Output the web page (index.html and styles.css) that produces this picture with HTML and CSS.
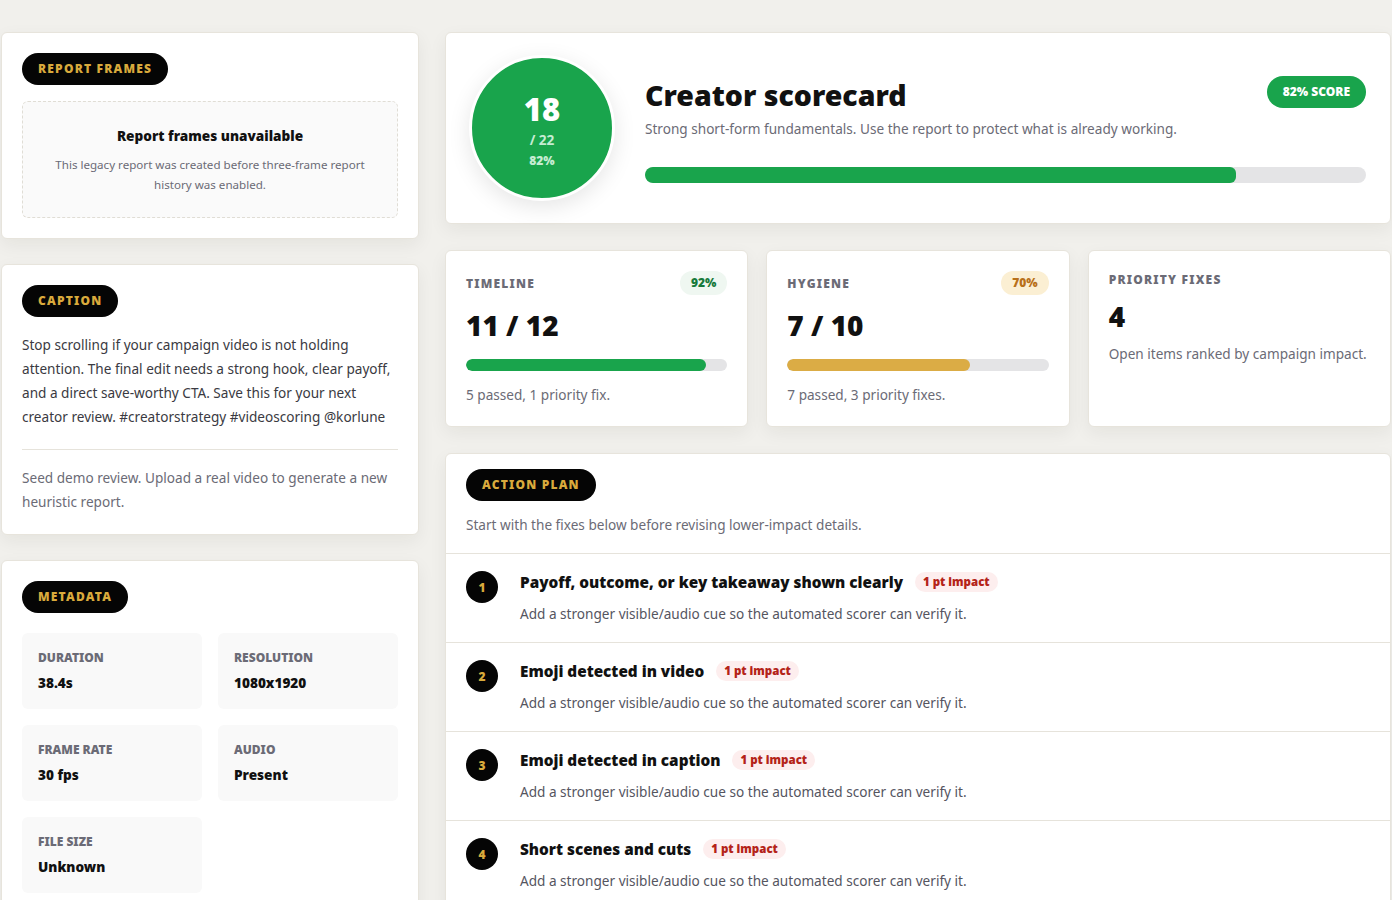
FILE: index.html
```html
<!DOCTYPE html>
<html lang="en">

<head>
    <meta charset="UTF-8">
    <meta name="viewport" content="width=device-width, initial-scale=1.0">
    <title>Creator scorecard</title>
    <link rel="stylesheet" href="styles.css">
</head>

<body>
    <div class="page">

        <aside class="side">
            <section class="card">
                <span class="chip">Report frames</span>
                <div class="empty">
                    <h4>Report frames unavailable</h4>
                    <p>This legacy report was created before three-frame report history was enabled.</p>
                </div>
            </section>

            <section class="card">
                <span class="chip">Caption</span>
                <p class="caption">Stop scrolling if your campaign video is not holding attention. The final edit needs a strong hook, clear payoff, and a direct save-worthy CTA. Save this for your next creator review. #creatorstrategy #videoscoring @korlune</p>
                <p class="note">Seed demo review. Upload a real video to generate a new heuristic report.</p>
            </section>

            <section class="card">
                <span class="chip">Metadata</span>
                <div class="meta">
                    <div class="tile"><span>Duration</span><b>38.4s</b></div>
                    <div class="tile"><span>Resolution</span><b>1080x1920</b></div>
                    <div class="tile"><span>Frame rate</span><b>30 fps</b></div>
                    <div class="tile"><span>Audio</span><b>Present</b></div>
                    <div class="tile"><span>File size</span><b>Unknown</b></div>
                </div>
            </section>
        </aside>

        <main class="main">
            <section class="card hero">
                <div class="ring">
                    <strong>18</strong>
                    <span class="of">/ 22</span>
                    <span class="pct">82%</span>
                </div>
                <div class="hero-body">
                    <div class="hero-top">
                        <h1>Creator scorecard</h1>
                        <span class="score-pill">82% score</span>
                    </div>
                    <p class="muted">Strong short-form fundamentals. Use the report to protect what is already working.</p>
                    <div class="bar big"><i style="width: 82%"></i></div>
                </div>
            </section>

            <div class="stats">
                <section class="card stat">
                    <div class="stat-head">
                        <span class="label">Timeline</span>
                        <span class="badge good">92%</span>
                    </div>
                    <div class="value">11 / 12</div>
                    <div class="bar"><i style="width: 92%"></i></div>
                    <p class="muted">5 passed, 1 priority fix.</p>
                </section>
                <section class="card stat">
                    <div class="stat-head">
                        <span class="label">Hygiene</span>
                        <span class="badge warn">70%</span>
                    </div>
                    <div class="value">7 / 10</div>
                    <div class="bar warn"><i style="width: 70%"></i></div>
                    <p class="muted">7 passed, 3 priority fixes.</p>
                </section>
                <section class="card stat plain">
                    <span class="label">Priority fixes</span>
                    <div class="value">4</div>
                    <p class="muted">Open items ranked by campaign impact.</p>
                </section>
            </div>

            <section class="card plan">
                <div class="plan-head">
                    <span class="chip">Action plan</span>
                    <p class="muted">Start with the fixes below before revising lower-impact details.</p>
                </div>
                <ol class="fixes">
                    <li>
                        <span class="num">1</span>
                        <div>
                            <h3>Payoff, outcome, or key takeaway shown clearly <em>1 pt impact</em></h3>
                            <p>Add a stronger visible/audio cue so the automated scorer can verify it.</p>
                        </div>
                    </li>
                    <li>
                        <span class="num">2</span>
                        <div>
                            <h3>Emoji detected in video <em>1 pt impact</em></h3>
                            <p>Add a stronger visible/audio cue so the automated scorer can verify it.</p>
                        </div>
                    </li>
                    <li>
                        <span class="num">3</span>
                        <div>
                            <h3>Emoji detected in caption <em>1 pt impact</em></h3>
                            <p>Add a stronger visible/audio cue so the automated scorer can verify it.</p>
                        </div>
                    </li>
                    <li>
                        <span class="num">4</span>
                        <div>
                            <h3>Short scenes and cuts <em>1 pt impact</em></h3>
                            <p>Add a stronger visible/audio cue so the automated scorer can verify it.</p>
                        </div>
                    </li>
                </ol>
            </section>
        </main>

    </div>
</body>

</html>
```

FILE: styles.css
```css
* {
    box-sizing: border-box;
}

body {
    margin: 0;
    background: #f1f0ec;
    font-family: "Noto Sans", sans-serif;
    color: #111;
    font-size: 13.6px;
}

.page {
    display: grid;
    grid-template-columns: 418px 946px;
    gap: 26px;
    padding: 32px 0 0 1px;
}

.side,
.main {
    display: flex;
    flex-direction: column;
    gap: 26px;
}

.side {
    gap: 25px;
}

.card {
    background: #fff;
    border: 1px solid #e7e4dc;
    border-radius: 6px;
    box-shadow: 0 6px 18px rgba(40, 35, 20, 0.06);
    padding: 20px;
}

.chip {
    display: inline-block;
    background: #050505;
    color: #d9aa3c;
    border-radius: 16px;
    padding: 0 16px;
    height: 32px;
    line-height: 32px;
    font-size: 12px;
    font-weight: 900;
    letter-spacing: 1.2px;
    text-transform: uppercase;
}

.muted {
    color: #6b6b76;
    margin: 0;
}

/* left column */
.empty {
    margin-top: 16px;
    border: 1px dashed #e0ddd5;
    border-radius: 6px;
    background: #fafafa;
    text-align: center;
    padding: 24px 20px 22px;
}

.empty h4 {
    margin: 0 0 10px;
    font-size: 13.6px;
    font-weight: 900;
}

.empty p {
    margin: 0;
    font-size: 11.6px;
    line-height: 20px;
    color: #6b6b76;
}

.caption {
    margin: 16px 0 0;
    line-height: 24px;
    color: #3a3a42;
    padding-bottom: 20px;
    border-bottom: 1px solid #e6e3db;
}

.note {
    margin: 16px 0 0;
    line-height: 24px;
    color: #6b6b76;
}

.meta {
    margin-top: 20px;
    display: grid;
    grid-template-columns: 1fr 1fr;
    gap: 16px;
}

.tile {
    background: #f9f9f9;
    border-radius: 6px;
    height: 76px;
    padding: 16px 16px 14px;
    display: flex;
    flex-direction: column;
    gap: 7px;
}

.tile span {
    font-size: 12px;
    font-weight: 900;
    text-transform: uppercase;
    color: #6b6b76;
}

.tile b {
    font-size: 13.6px;
    font-weight: 900;
}

/* scorecard */
.hero {
    display: flex;
    align-items: center;
    gap: 30px;
    padding: 22px 24px 22px 23px;
}

.ring {
    flex: none;
    width: 146px;
    height: 146px;
    padding-top: 7px;
    border-radius: 50%;
    background: #19a44c;
    border: 3px solid #fff;
    box-shadow: 0 6px 22px rgba(0, 0, 0, 0.1);
    color: #fff;
    display: flex;
    flex-direction: column;
    align-items: center;
    justify-content: center;
}

.ring strong {
    font-size: 31px;
    font-weight: 900;
    line-height: 30px;
}

.ring .of {
    font-size: 13.6px;
    font-weight: 700;
    color: #c5ecd2;
    line-height: 20px;
    margin-top: 6px;
}

.ring .pct {
    font-size: 12px;
    font-weight: 900;
    color: #c5ecd2;
    line-height: 16px;
    margin-top: 3px;
}

.hero-body {
    flex: 1;
    padding-bottom: 8px;
}

.hero-top {
    display: flex;
    justify-content: space-between;
    align-items: flex-start;
}

.hero h1 {
    margin: 11px 0 6px;
    font-size: 28.5px;
    font-weight: 900;
    line-height: 36px;
}

.score-pill {
    margin-top: 10px;
    background: #19a44c;
    color: #fff;
    border-radius: 16px;
    height: 32px;
    line-height: 32px;
    padding: 0 16px;
    font-size: 12px;
    font-weight: 900;
    text-transform: uppercase;
}

.bar {
    height: 12px;
    background: #e4e4e6;
    border-radius: 6px;
    overflow: hidden;
}

.bar i {
    display: block;
    height: 100%;
    background: #19a44c;
    border-radius: 6px;
}

.bar.warn i {
    background: #dbac45;
}

.bar.big {
    margin-top: 29px;
    height: 16px;
    border-radius: 8px;
}

/* stat cards */
.stats {
    display: grid;
    grid-template-columns: repeat(3, 1fr);
    gap: 18px;
}

.stat {
    height: 177px;
}

.stat-head {
    display: flex;
    justify-content: space-between;
    align-items: center;
}

.label {
    font-size: 12px;
    font-weight: 900;
    letter-spacing: 1.2px;
    text-transform: uppercase;
    color: #6b6b76;
}

.badge {
    border-radius: 12px;
    height: 24px;
    line-height: 24px;
    padding: 0 11px;
    font-size: 12px;
    font-weight: 900;
}

.badge.good {
    background: #eff7f1;
    color: #177a3b;
}

.badge.warn {
    background: #fbefd3;
    color: #b8701a;
}

.value {
    font-size: 28px;
    font-weight: 900;
    line-height: 40px;
    margin: 10px 0 14px;
}

.stat .muted {
    margin-top: 14px;
}

.stat.plain {
    padding-top: 18px;
}

.stat.plain .value {
    margin: 8px 0 8px;
}

.stat.plain .muted {
    margin-top: 0;
}

/* action plan */
.plan {
    padding: 0;
}

.plan-head {
    padding: 15px 20px 19px;
    border-bottom: 1px solid #e6e3db;
}

.plan-head .muted {
    margin-top: 14px;
}

.fixes {
    list-style: none;
    margin: 0;
    padding: 0;
}

.fixes li {
    display: flex;
    gap: 22px;
    padding: 15px 20px;
    height: 89px;
    border-bottom: 1px solid #e6e3db;
}

.num {
    flex: none;
    width: 32px;
    height: 32px;
    margin-top: 2px;
    border-radius: 50%;
    background: #050505;
    color: #d9aa3c;
    font-size: 12px;
    font-weight: 900;
    display: flex;
    align-items: center;
    justify-content: center;
}

.fixes h3 {
    margin: 0;
    font-size: 15.3px;
    font-weight: 900;
    line-height: 26px;
}

.fixes em {
    font-style: normal;
    display: inline-block;
    margin-left: 8px;
    background: #fdeeee;
    color: #b42318;
    border-radius: 10px;
    padding: 0 8px;
    height: 20px;
    line-height: 20px;
    font-size: 11.5px;
    font-weight: 900;
    vertical-align: 2px;
}

.fixes p {
    margin: 9px 0 0;
    color: #55555f;
}
```
